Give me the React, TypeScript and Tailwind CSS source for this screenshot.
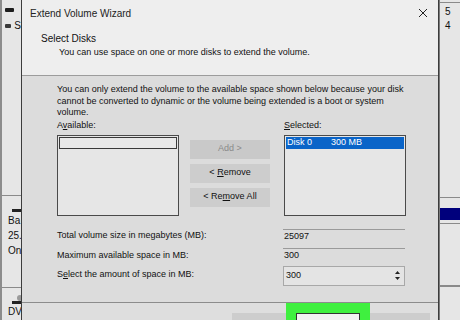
import React from "react";

function ListBox({ children }: { children?: React.ReactNode }) {
  return (
    <div className="w-[122px] h-[81px] border border-[#4a4a4a] bg-[#e6e6e6] p-[1px]">
      {children}
    </div>
  );
}

function WinButton({ label, disabled }: { label: React.ReactNode; disabled?: boolean }) {
  return (
    <div
      className={
        "w-[80px] h-[19px] flex items-center justify-center " +
        (disabled ? "bg-[#c9c9c9] text-[#8a8a8a]" : "bg-[#cdcdcd] text-[#111]")
      }
    >
      {label}
    </div>
  );
}

export default function App() {
  return (
    <div
      className="w-[460px] h-[320px] overflow-hidden flex bg-[#e4e4e4] text-[#111]"
      style={{ fontFamily: '"Liberation Sans", Arial, sans-serif' }}
    >
      {/* disk management behind, left */}
      <div className="w-[21px] shrink-0 h-full border-l-2 border-[#8c8c8c] bg-[#e6e6e6] flex flex-col text-[10px]">
        <div className="h-[195px] shrink-0 pt-[8px] pl-[3px] flex flex-col gap-[9px]">
          <div className="w-[9px] h-[4px] bg-[#1c1c1c] rounded-[1px]" />
          <div className="flex items-center gap-[3px]">
            <div className="w-[9px] h-[4px] bg-[#3a3a3a] rounded-[1px]" />
            <span className="leading-none">S</span>
          </div>
        </div>
        <div className="h-[92px] shrink-0 border-t border-[#8a8a8a] pt-[13px] pl-[6px] leading-[15px]">
          <div className="w-[9px] h-[3px] bg-[#222] ml-[4px] mb-[1px]" />
          <div>Ba</div>
          <div>25.</div>
          <div>On</div>
        </div>
        <div className="flex-1 min-h-0 border-t border-[#8a8a8a] pt-[7px] pl-[6px] leading-[13px]">
          <div className="w-[6px] h-[6px] rounded-full bg-[#9a9a9a] ml-[9px]" />
          <div className="w-[9px] h-[3px] bg-[#222] ml-[4px] mb-[1px]" />
          <div>DV</div>
        </div>
      </div>

      {/* wizard dialog */}
      <div className="w-[418px] shrink-0 h-full border-x border-[#3c3c3c] flex flex-col text-[9px]">
        <div className="h-[76px] shrink-0 bg-[#eeeeee] border-b border-[#9c9c9c] flex flex-col">
          <div className="h-[26px] flex items-center justify-between pl-[8px] pr-[10px]">
            <span className="text-[10px] text-[#222]">Extend Volume Wizard</span>
            <svg width="10" height="10" viewBox="0 0 10 10">
              <path d="M1 1 L9 9 M9 1 L1 9" stroke="#222" strokeWidth="1" />
            </svg>
          </div>
          <div className="pl-[19px] mt-[7px] text-[10px] leading-[12px]">Select Disks</div>
          <div className="pl-[37px] mt-[1px] leading-[12px]">
            You can use space on one or more disks to extend the volume.
          </div>
        </div>

        <div className="h-[227px] shrink-0 bg-[#dcdcdc] border-b border-[#8c8c8c] pl-[35px] pt-[8px] flex flex-col">
          <div className="leading-[11.5px] pr-[30px]">
            You can only extend the volume to the available space shown below because your disk
            cannot be converted to dynamic or the volume being extended is a boot or system
            volume.
          </div>
          <div className="flex">
            <div className="flex flex-col">
              <div className="leading-[12px] mb-[4px]">
                A<u>v</u>ailable:
              </div>
              <ListBox>
                <div className="h-[12px] border-[1.5px] border-[#3a3a3a] bg-[#e9e9e9]" />
              </ListBox>
            </div>
            <div className="flex flex-col gap-[5px] ml-[11px] mt-[21px]">
              <WinButton label="Add >" disabled />
              <WinButton
                label={
                  <span>
                    &lt; <u>R</u>emove
                  </span>
                }
              />
              <WinButton
                label={
                  <span>
                    &lt; Re<u>m</u>ove All
                  </span>
                }
              />
            </div>
            <div className="flex flex-col ml-[14px]">
              <div className="leading-[12px] mb-[4px]">
                <u>S</u>elected:
              </div>
              <ListBox>
                <div className="h-[12px] bg-[#0a64c8] text-white flex items-center pl-[1px]">
                  <span className="w-[44px]">Disk 0</span>
                  <span>300 MB</span>
                </div>
              </ListBox>
            </div>
          </div>
          <div className="flex flex-col mt-[13px]">
            <div className="h-[19px] flex items-start">
              <div className="w-[226px] leading-[12px]">Total volume size in megabytes (MB):</div>
              <div className="w-[122px] h-full border-t border-[#9a9a9a] leading-[12px] pl-[1px]">25097</div>
            </div>
            <div className="h-[18px] flex items-start">
              <div className="w-[226px] leading-[12px] pt-[1px]">Maximum available space in MB:</div>
              <div className="w-[122px] h-full border-t border-[#9a9a9a] leading-[12px] pl-[1px]">300</div>
            </div>
            <div className="h-[20px] flex items-start">
              <div className="w-[226px] leading-[12px] pt-[2px]">
                S<u>e</u>lect the amount of space in MB:
              </div>
              <div className="w-[122px] h-[20px] border border-[#a8a8a8] bg-[#e4e4e4] flex items-center">
                <span className="flex-1 pl-[2px]">300</span>
                <div className="w-[12px] h-full flex flex-col items-center justify-center gap-[3px] mr-[1px]">
                  <svg width="5" height="3" viewBox="0 0 5 3">
                    <path d="M0 3 L2.5 0 L5 3 Z" fill="#222" />
                  </svg>
                  <svg width="5" height="3" viewBox="0 0 5 3">
                    <path d="M0 0 L5 0 L2.5 3 Z" fill="#222" />
                  </svg>
                </div>
              </div>
            </div>
          </div>
        </div>

        <div className="flex-1 min-h-0 overflow-hidden bg-[#dedede] flex items-start pl-[210px]">
          <div className="w-[54px] h-[20px] mt-[10px] bg-[#cdcdcd]" />
          <div className="w-[84px] h-[20px] bg-[#3ff03f] pt-[10px] pl-[10px]">
            <div className="w-[64px] h-[20px] border border-[#333] bg-[#f2f2f2]" />
          </div>
          <div className="w-[60px] h-[20px] mt-[10px] bg-[#cdcdcd]" />
        </div>
      </div>

      {/* disk management behind, right */}
      <div className="flex-1 h-full border-l border-[#7a7a7a] bg-[#e6e6e6] flex flex-col text-[10px]">
        <div className="h-[195px] shrink-0 mt-[2px] border-t border-[#8a8a8a] pl-[5px] pt-[2px] leading-[14px]">
          <div>5</div>
          <div>4</div>
        </div>
        <div className="h-[26px] shrink-0 border-t border-[#8a8a8a] pt-[10px]">
          <div className="h-[12px] bg-[#00007c]" />
        </div>
        <div className="h-[62px] shrink-0 border-t border-[#8a8a8a]" />
        <div className="flex-1 min-h-0 border-t-2 border-[#8a8a8a]" />
      </div>
    </div>
  );
}
